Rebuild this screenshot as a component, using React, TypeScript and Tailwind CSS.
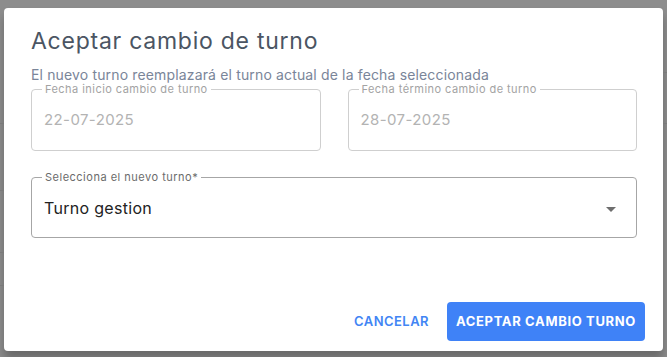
import React from "react";

const font = { fontFamily: "Inter, 'Noto Sans', sans-serif" };

function DateField({ label, value }: { label: string; value: string }) {
  return (
    <fieldset className="m-0 block flex-1 h-[67px] rounded-[4px] border border-[#cfcfcf] px-[12px]">
      <legend className="ml-[-2px] px-[3px] text-[11px] leading-[10px] tracking-[0.45px] text-[#a3a3a3]">{label}</legend>
      <div className="pt-[16px] text-[15px] leading-[20px] tracking-[0.4px] text-[#b3b3b3]">{value}</div>
    </fieldset>
  );
}

export default function App() {
  return (
    <div className="relative w-[667px] h-[357px] bg-[#8d8d8d] overflow-hidden" style={font}>
      <div className="absolute left-0 top-[123px] w-[4px] h-px bg-[#7a7a7a]" />
      <div className="absolute left-0 top-[190px] w-[4px] h-px bg-[#7a7a7a]" />
      <div className="absolute left-0 top-[252px] w-[4px] h-px bg-[#7a7a7a]" />
      <div className="absolute left-0 top-[285px] w-[4px] h-px bg-[#7a7a7a]" />
      <div className="absolute right-0 top-[72px] w-[4px] h-px bg-[#7a7a7a]" />
      <div className="absolute right-0 top-[123px] w-[4px] h-px bg-[#7a7a7a]" />
      <div className="pt-[8px] pl-[4px]">
        <div className="w-[659px] h-[343px] bg-white rounded-[4px] shadow-[0_8px_10px_rgba(0,0,0,0.25)] flex flex-col pl-[27px] pr-[26px]">
          <h2 className="mt-[17px] text-[23px] leading-[32px] tracking-[0.75px] text-[#4b5563] font-normal">Aceptar cambio de turno</h2>
          <p className="mt-[10px] text-[14px] leading-[16px] tracking-[0.15px] text-[#7a8599]">
            El nuevo turno reemplazará el turno actual de la fecha seleccionada
          </p>
          <div className="flex gap-[27px] mt-[1px]">
            <DateField label="Fecha inicio cambio de turno" value="22-07-2025" />
            <DateField label="Fecha término cambio de turno" value="28-07-2025" />
          </div>
          <fieldset className="m-0 block mt-[21px] h-[66px] rounded-[4px] border border-[#a6a6a6] pl-[12px] pr-[20px]">
            <legend className="ml-[-2px] px-[3px] text-[11px] leading-[10px] tracking-[0.5px] text-[#6b6b6b]">Selecciona el nuevo turno*</legend>
            <div className="flex items-center justify-between pt-[15px]">
              <span className="text-[16px] leading-[22px] tracking-[0.3px] text-[#222222]">Turno gestion</span>
              <svg width="10" height="5" viewBox="0 0 10 5" className="mt-[3px]"><path d="M0 0h10L5 5z" fill="#6e6e6e" /></svg>
            </div>
          </fieldset>
          <div className="mt-auto mb-[10px] mr-[-8px] flex justify-end items-center gap-[10px]">
            <button className="h-[39px] px-[8px] text-[13px] font-semibold tracking-[0.45px] text-[#4285f4]">CANCELAR</button>
            <button className="h-[39px] w-[198px] rounded-[4px] bg-[#3f82f7] text-[13px] font-bold tracking-[0.65px] text-white">ACEPTAR CAMBIO TURNO</button>
          </div>
        </div>
      </div>
    </div>
  );
}
